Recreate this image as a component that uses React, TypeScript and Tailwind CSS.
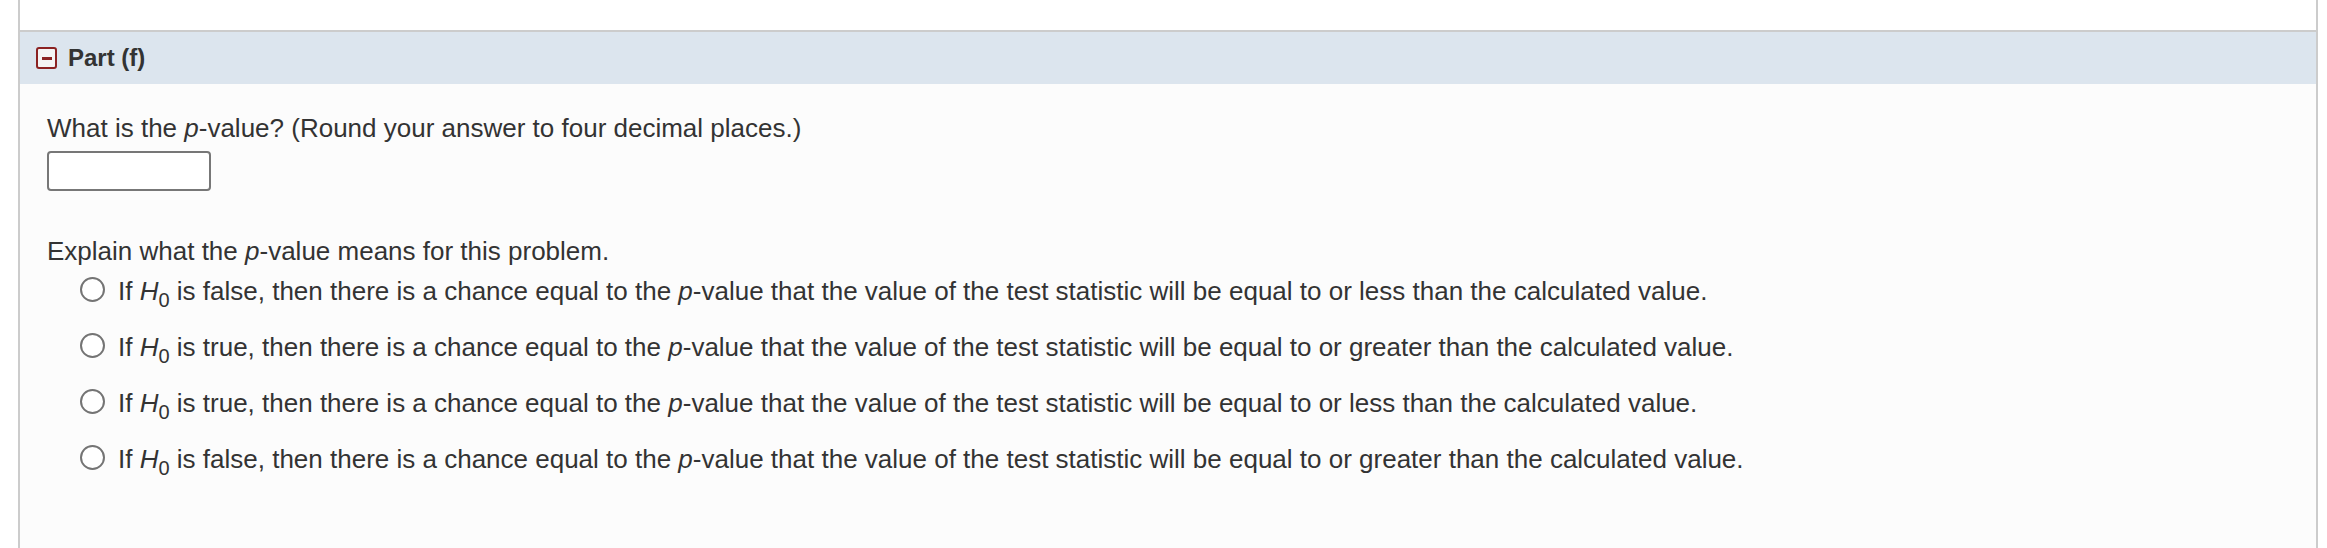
import React from "react";

const options = [
	"is false, then there is a chance equal to the |p|-value that the value of the test statistic will be equal to or less than the calculated value.",
	"is true, then there is a chance equal to the |p|-value that the value of the test statistic will be equal to or greater than the calculated value.",
	"is true, then there is a chance equal to the |p|-value that the value of the test statistic will be equal to or less than the calculated value.",
	"is false, then there is a chance equal to the |p|-value that the value of the test statistic will be equal to or greater than the calculated value.",
];

function H0() {
	return (
		<>
			<i>H</i>
			<sub className="text-[20px] bottom-0 align-[-7px] leading-none">0</sub>
		</>
	);
}

function Option({ text }: { text: string }) {
	let [a, p, b] = text.split("|");
	return (
		<label className="flex items-start h-[56px]">
			<span className="block w-[25px] h-[25px] mt-[14px] rounded-full border-2 border-[#747474] bg-white ml-[33px] mr-[13px] shrink-0" />
			<span className="mt-[11px] leading-[34px]">
				If <H0 /> {a}
				<i>{p}</i>
				{b}
			</span>
		</label>
	);
}

export default function App() {
	return (
		<div className="w-[2327px] h-[548px] bg-white text-[#333] text-[26px] font-['Liberation_Sans',Arial,sans-serif]">
			<div className="ml-[18px] w-[2300px] h-full border-l-2 border-r-2 border-[#cccccc] flex flex-col">
				<div className="h-[30px] bg-white" />
				<div className="h-[54px] border-t-2 border-[#cccccc] bg-[#dce5ee] flex items-center pl-[16px]">
					<span className="w-[21px] h-[22px] rounded-[3px] border-2 border-[#8b2222] bg-[#f4f4f4] flex items-center justify-center mr-[11px]">
						<span className="w-[10px] h-[3px] bg-[#8b2222]" />
					</span>
					<span className="font-bold text-[24px] text-[#333]">Part (f)</span>
				</div>
				<div className="flex-1 bg-[#fcfcfc] pl-[27px] pt-[27px]">
					<p className="leading-[34px]">
						What is the <i>p</i>-value? (Round your answer to four decimal places.)
					</p>
					<input className="mt-[6px] block w-[164px] h-[40px] border-2 border-[#777] rounded-[4px] bg-white" />
					<p className="mt-[43px] leading-[34px]">
						Explain what the <i>p</i>-value means for this problem.
					</p>
					<div className="-mt-[5px]">
						{options.map((o, i) => (
							<Option key={i} text={o} />
						))}
					</div>
				</div>
			</div>
		</div>
	);
}
